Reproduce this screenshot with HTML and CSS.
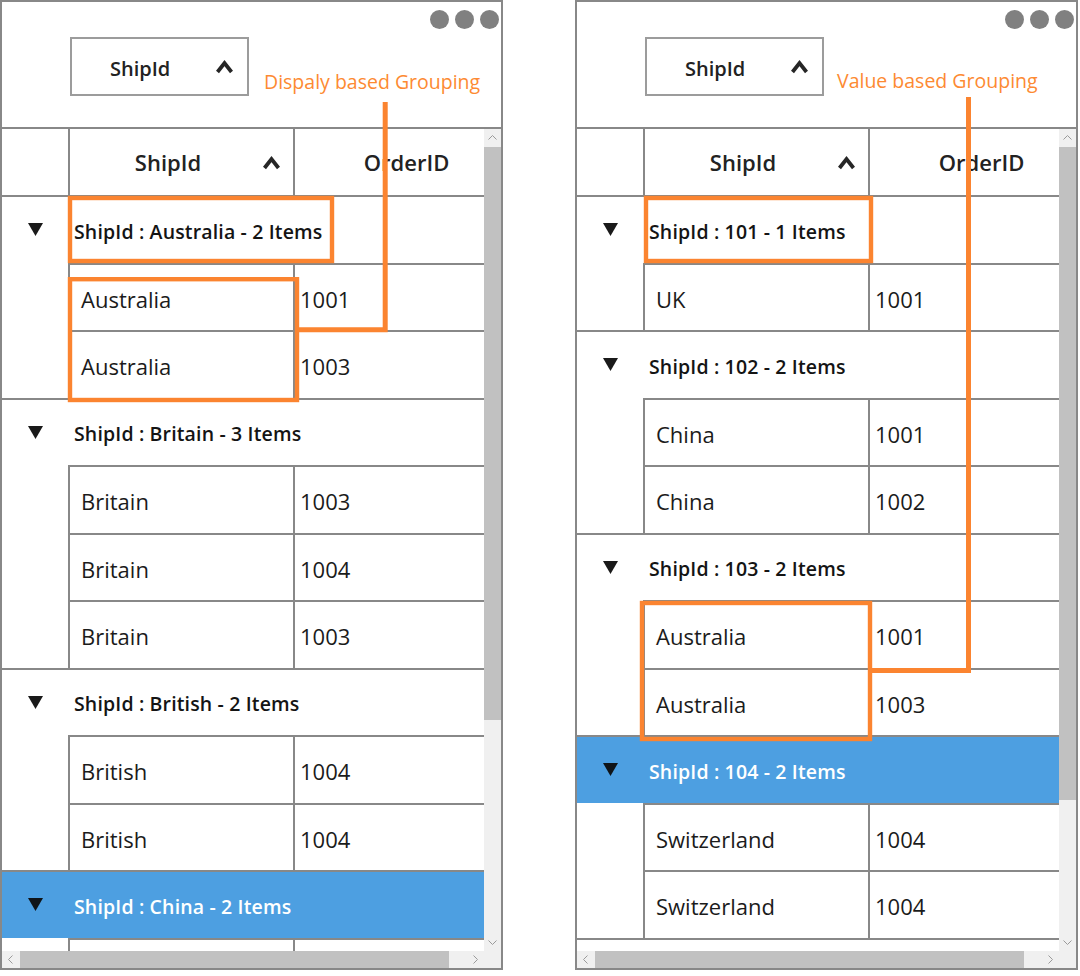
FILE: index.html
```html
<!DOCTYPE html>
<html lang="en">
<head>
<meta charset="utf-8">
<title>Grouping comparison</title>
<link rel="stylesheet" href="styles.css">
</head>
<body>
<div class="page">

  <div class="window">
    <div class="toolbar">
      <div class="dots"><span></span><span></span><span></span></div>
      <div class="chip">
        <span class="chip-label">ShipId</span>
        <svg class="caret" width="17" height="15" viewBox="0 0 17 15"><polyline points="1.5,13 8.5,4 15.5,13"/></svg>
      </div>
    </div>
    <div class="gridarea">
      <div class="viewport">
        <div class="row header">
          <div class="indent"></div>
          <div class="cell hcell ship"><span class="htext">ShipId</span><svg class="caret" width="17" height="15" viewBox="0 0 17 15"><polyline points="1.5,13 8.5,4 15.5,13"/></svg></div>
          <div class="cell hcell order"><span class="htext">OrderID</span></div>
        </div>

        <div class="row group">
          <div class="indent"><svg class="tri" width="15" height="13" viewBox="0 0 15 13"><polygon points="0,0 15,0 7.5,13"/></svg></div>
          <div class="gcontent">ShipId : Australia - 2 Items</div>
        </div>
        <div class="row data">
          <div class="indent"></div>
          <div class="cell ship">Australia</div>
          <div class="cell order">1001</div>
        </div>
        <div class="row data last">
          <div class="indent"></div>
          <div class="cell ship">Australia</div>
          <div class="cell order">1003</div>
        </div>

        <div class="row group">
          <div class="indent"><svg class="tri" width="15" height="13" viewBox="0 0 15 13"><polygon points="0,0 15,0 7.5,13"/></svg></div>
          <div class="gcontent">ShipId : Britain - 3 Items</div>
        </div>
        <div class="row data">
          <div class="indent"></div>
          <div class="cell ship">Britain</div>
          <div class="cell order">1003</div>
        </div>
        <div class="row data">
          <div class="indent"></div>
          <div class="cell ship">Britain</div>
          <div class="cell order">1004</div>
        </div>
        <div class="row data last">
          <div class="indent"></div>
          <div class="cell ship">Britain</div>
          <div class="cell order">1003</div>
        </div>

        <div class="row group">
          <div class="indent"><svg class="tri" width="15" height="13" viewBox="0 0 15 13"><polygon points="0,0 15,0 7.5,13"/></svg></div>
          <div class="gcontent">ShipId : British - 2 Items</div>
        </div>
        <div class="row data">
          <div class="indent"></div>
          <div class="cell ship">British</div>
          <div class="cell order">1004</div>
        </div>
        <div class="row data last">
          <div class="indent"></div>
          <div class="cell ship">British</div>
          <div class="cell order">1004</div>
        </div>

        <div class="row group sel">
          <div class="indent"><svg class="tri" width="15" height="13" viewBox="0 0 15 13"><polygon points="0,0 15,0 7.5,13"/></svg></div>
          <div class="gcontent">ShipId : China - 2 Items</div>
        </div>
        <div class="row data">
          <div class="indent"></div>
          <div class="cell ship"></div>
          <div class="cell order"></div>
        </div>
      </div>
      <div class="vscroll">
        <div class="sbtn"><svg width="9" height="5" viewBox="0 0 9 5"><polyline points="0.5,4.5 4.5,0.5 8.5,4.5"/></svg></div>
        <div class="vthumb" style="height:573px"></div>
        <div class="strack"></div>
        <div class="sbtn"><svg width="9" height="5" viewBox="0 0 9 5"><polyline points="0.5,0.5 4.5,4.5 8.5,0.5"/></svg></div>
      </div>
      <div class="hscroll">
        <div class="sbtn"><svg width="5" height="9" viewBox="0 0 5 9"><polyline points="4.5,0.5 0.5,4.5 4.5,8.5"/></svg></div>
        <div class="hthumb" style="width:429px"></div>
        <div class="strack"></div>
        <div class="sbtn"><svg width="5" height="9" viewBox="0 0 5 9"><polyline points="0.5,0.5 4.5,4.5 0.5,8.5"/></svg></div>
      </div>
      <div class="corner"></div>
    </div>
    <div class="note note-a">Dispaly based Grouping</div>
    <svg class="overlay" width="503" height="972" viewBox="0 0 503 972">
      <rect class="box" x="70" y="198" width="262" height="63"/>
      <rect class="box" x="70" y="279.2" width="227" height="120.8"/>
      <polyline class="link" points="385.2,102 385.2,329.7 297,329.7"/>
    </svg>
  </div>

  <div class="window">
    <div class="toolbar">
      <div class="dots"><span></span><span></span><span></span></div>
      <div class="chip">
        <span class="chip-label">ShipId</span>
        <svg class="caret" width="17" height="15" viewBox="0 0 17 15"><polyline points="1.5,13 8.5,4 15.5,13"/></svg>
      </div>
    </div>
    <div class="gridarea">
      <div class="viewport">
        <div class="row header">
          <div class="indent"></div>
          <div class="cell hcell ship"><span class="htext">ShipId</span><svg class="caret" width="17" height="15" viewBox="0 0 17 15"><polyline points="1.5,13 8.5,4 15.5,13"/></svg></div>
          <div class="cell hcell order"><span class="htext">OrderID</span></div>
        </div>

        <div class="row group">
          <div class="indent"><svg class="tri" width="15" height="13" viewBox="0 0 15 13"><polygon points="0,0 15,0 7.5,13"/></svg></div>
          <div class="gcontent">ShipId : 101 - 1 Items</div>
        </div>
        <div class="row data last">
          <div class="indent"></div>
          <div class="cell ship">UK</div>
          <div class="cell order">1001</div>
        </div>

        <div class="row group">
          <div class="indent"><svg class="tri" width="15" height="13" viewBox="0 0 15 13"><polygon points="0,0 15,0 7.5,13"/></svg></div>
          <div class="gcontent">ShipId : 102 - 2 Items</div>
        </div>
        <div class="row data">
          <div class="indent"></div>
          <div class="cell ship">China</div>
          <div class="cell order">1001</div>
        </div>
        <div class="row data last">
          <div class="indent"></div>
          <div class="cell ship">China</div>
          <div class="cell order">1002</div>
        </div>

        <div class="row group">
          <div class="indent"><svg class="tri" width="15" height="13" viewBox="0 0 15 13"><polygon points="0,0 15,0 7.5,13"/></svg></div>
          <div class="gcontent">ShipId : 103 - 2 Items</div>
        </div>
        <div class="row data">
          <div class="indent"></div>
          <div class="cell ship">Australia</div>
          <div class="cell order">1001</div>
        </div>
        <div class="row data last">
          <div class="indent"></div>
          <div class="cell ship">Australia</div>
          <div class="cell order">1003</div>
        </div>

        <div class="row group sel">
          <div class="indent"><svg class="tri" width="15" height="13" viewBox="0 0 15 13"><polygon points="0,0 15,0 7.5,13"/></svg></div>
          <div class="gcontent">ShipId : 104 - 2 Items</div>
        </div>
        <div class="row data">
          <div class="indent"></div>
          <div class="cell ship">Switzerland</div>
          <div class="cell order">1004</div>
        </div>
        <div class="row data last">
          <div class="indent"></div>
          <div class="cell ship">Switzerland</div>
          <div class="cell order">1004</div>
        </div>
      </div>
      <div class="vscroll">
        <div class="sbtn"><svg width="9" height="5" viewBox="0 0 9 5"><polyline points="0.5,4.5 4.5,0.5 8.5,4.5"/></svg></div>
        <div class="vthumb" style="height:653px"></div>
        <div class="strack"></div>
        <div class="sbtn"><svg width="9" height="5" viewBox="0 0 9 5"><polyline points="0.5,0.5 4.5,4.5 8.5,0.5"/></svg></div>
      </div>
      <div class="hscroll">
        <div class="sbtn"><svg width="5" height="9" viewBox="0 0 5 9"><polyline points="4.5,0.5 0.5,4.5 4.5,8.5"/></svg></div>
        <div class="hthumb" style="width:429px"></div>
        <div class="strack"></div>
        <div class="sbtn"><svg width="5" height="9" viewBox="0 0 5 9"><polyline points="0.5,0.5 4.5,4.5 0.5,8.5"/></svg></div>
      </div>
      <div class="corner"></div>
    </div>
    <div class="note note-b">Value based Grouping</div>
    <svg class="overlay" width="503" height="972" viewBox="0 0 503 972">
      <rect class="box" x="71" y="198" width="225" height="63"/>
      <rect class="box" x="67" y="603" width="228" height="136"/>
      <polyline class="link" points="393.5,97 393.5,670.5 293,670.5"/>
    </svg>
  </div>

</div>
</body>
</html>
```

FILE: styles.css
```css
* {
  box-sizing: border-box;
}

body {
  margin: 0;
  background: #ffffff;
  font-family: "Open Sans", "Noto Sans", sans-serif;
  color: #1b1b1b;
}

.page {
  display: flex;
  gap: 72px;
}

.window {
  position: relative;
  width: 503px;
  height: 970px;
  border: 2px solid #888888;
  box-shadow: 0 2px 0 #000000;
  background: #ffffff;
  display: flex;
  flex-direction: column;
}

/* ---------- group drop area ---------- */
.toolbar {
  flex: none;
  height: 127px;
  border-bottom: 2px solid #888888;
  padding: 8px 0 0 68px;
  display: flex;
  flex-direction: column;
}

.dots {
  display: flex;
  justify-content: flex-end;
  gap: 6px;
  height: 19px;
  margin: 0 2px 8px 0;
}

.dots span {
  width: 19px;
  height: 19px;
  border-radius: 50%;
  background: #808080;
}

.chip {
  width: 179px;
  height: 59px;
  border: 2px solid #9c9c9c;
  display: flex;
  align-items: center;
  padding: 0 14px 0 38px;
}

.chip-label {
  font-size: 20px;
  font-weight: 600;
  color: #222222;
  padding-top: 3px;
}

.chip .caret {
  margin-left: auto;
}

.caret {
  flex: none;
  overflow: visible;
}

.caret polyline {
  fill: none;
  stroke: #262626;
  stroke-width: 3.8;
  stroke-linejoin: miter;
}

/* ---------- grid ---------- */
.gridarea {
  flex: 1;
  min-height: 0;
  display: grid;
  grid-template-columns: 1fr 17px;
  grid-template-rows: 1fr 17px;
}

.viewport {
  overflow: hidden;
  min-width: 0;
  min-height: 0;
}

.row {
  display: flex;
  width: 516px;
  height: 67.5px;
}

.row.header {
  height: 68px;
}

.indent {
  flex: none;
  width: 66px;
  border-bottom: 2px solid transparent;
  display: flex;
  align-items: center;
  padding-left: 26px;
}

.header .indent,
.last .indent {
  border-bottom-color: #888888;
}

.cell {
  flex: none;
  width: 225px;
  border-left: 2px solid #888888;
  border-bottom: 2px solid #888888;
  display: flex;
  align-items: center;
  font-size: 22px;
  padding-top: 3px;
  white-space: nowrap;
}

.cell.ship {
  padding-left: 11px;
}

.cell.order {
  padding-left: 5px;
}

.hcell {
  font-weight: 600;
  color: #222222;
  padding-top: 0;
}

.hcell.ship {
  padding: 0 13px 0 3px;
}

.hcell.order {
  padding: 0;
}

.htext {
  flex: 1;
  text-align: center;
}

.gcontent {
  flex: 1;
  border-bottom: 2px solid #888888;
  display: flex;
  align-items: center;
  padding: 3px 0 0 6px;
  font-size: 19.5px;
  font-weight: 600;
  letter-spacing: 0.15px;
  color: #141414;
  white-space: nowrap;
}

.tri polygon {
  fill: #1a1a1a;
}

.sel .indent,
.sel .gcontent {
  background: #4d9fe1;
  background-clip: padding-box;
}

.sel .gcontent {
  color: #ffffff;
}

.sel .tri polygon {
  fill: #0f1418;
}

/* ---------- scrollbars ---------- */
.vscroll {
  background: #f0f0f0;
  display: flex;
  flex-direction: column;
}

.hscroll {
  background: #f0f0f0;
  display: flex;
}

.corner {
  background: #f0f0f0;
}

.sbtn {
  flex: none;
  width: 17px;
  height: 17px;
  display: flex;
  align-items: center;
  justify-content: center;
}

.sbtn polyline {
  fill: none;
  stroke: #9a9a9a;
  stroke-width: 1;
}

.vthumb {
  flex: none;
  margin-top: 1px;
  background: #c1c1c1;
}

.hthumb {
  flex: none;
  margin-left: 1px;
  background: #c1c1c1;
}

.strack {
  flex: 1;
}

/* ---------- annotations ---------- */
.note {
  position: absolute;
  font-size: 19.5px;
  color: #fd8a32;
  white-space: nowrap;
}

.note-a {
  left: 262px;
  top: 66px;
}

.note-b {
  left: 260px;
  top: 65px;
}

.overlay {
  position: absolute;
  left: -2px;
  top: -2px;
  pointer-events: none;
  overflow: visible;
}

.overlay .box {
  fill: none;
  stroke: #fb8430;
  stroke-width: 4.4;
}

.overlay .link {
  fill: none;
  stroke: #fb8430;
  stroke-width: 5;
  stroke-linejoin: miter;
}
```
